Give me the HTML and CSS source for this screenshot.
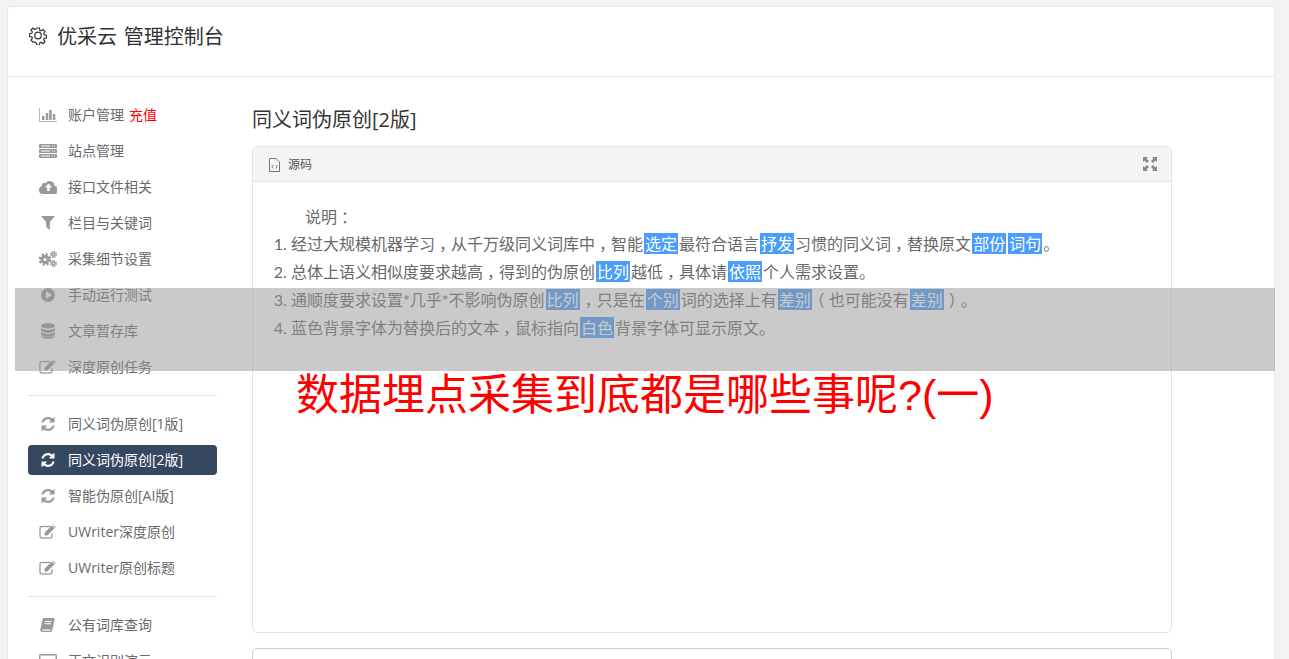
FILE: index.html
```html
<!DOCTYPE html>
<html lang="zh-CN">
<head>
<meta charset="utf-8">
<title>优采云 管理控制台</title>
<link rel="stylesheet" href="styles.css">
</head>
<body>
<svg class="defs" width="0" height="0" aria-hidden="true">
  <symbol id="i-bar" viewBox="0 0 18 14"><path opacity=".7" d="M0 0h1v13h17v1H0z"/><path d="M3 8h2.500v4H3zM6.800 5h2.500v7H6.800zM10.200 2h2.500v10h-2.500zM13.800 6h2.500v6h-2.500z"/></symbol>
  <symbol id="i-server" viewBox="0 0 18 14"><path fill-rule="evenodd" d="M1 0h16a1 1 0 0 1 1 1v2.500a.5.500 0 0 1-.5.500H.5a.5.500 0 0 1-.5-.5V1a1 1 0 0 1 1-1zM.5 5h17a.5.500 0 0 1 .5.500v3a.5.500 0 0 1-.5.500H.5a.5.500 0 0 1-.5-.5v-3A.5.500 0 0 1 .5 5zM.5 10h17a.5.500 0 0 1 .5.500V13a1 1 0 0 1-1 1H1a1 1 0 0 1-1-1v-2.500a.5.500 0 0 1 .5-.5zM2 1.500v1h9v-1zM13 1.500v1h1v-1zM15 1.500v1h1v-1zM2 6.500v1h9v-1zM13 6.500v1h1v-1zM15 6.500v1h1v-1zM2 11.500v1h9v-1zM13 11.500v1h1v-1zM15 11.500v1h1v-1z"/></symbol>
  <symbol id="i-cloud" viewBox="0 0 18 14"><path fill-rule="evenodd" d="M4 14a4 4 0 0 1-1.300-7.800A3 3 0 0 1 6.500 3 5 5 0 0 1 15.500 6 4 4 0 0 1 14.500 14zM9.500 3.500 5.800 7.500h2.400V11h2.600V7.500h2.400z"/></symbol>
  <symbol id="i-filter" viewBox="0 0 14 14"><path d="M0 0h14L8.800 6v8L5.200 11V6z"/></symbol>
  <symbol id="i-cogs" viewBox="0 0 18 16">
    <g fill="none" stroke="currentColor"><circle cx="6" cy="8.500" r="3" stroke-width="3"/><circle cx="6" cy="8.500" r="5.200" stroke-width="2.200" stroke-dasharray="2.300 1.780"/><circle cx="14.500" cy="3.500" r="1.600" stroke-width="1.600"/><circle cx="14.500" cy="3.500" r="3" stroke-width="1.200" stroke-dasharray="1.300 1.060"/><circle cx="14.500" cy="12.500" r="1.600" stroke-width="1.600"/><circle cx="14.500" cy="12.500" r="3" stroke-width="1.200" stroke-dasharray="1.300 1.060"/></g>
  </symbol>
  <symbol id="i-play" viewBox="0 0 14 14"><path fill-rule="evenodd" d="M7 0a7 7 0 1 1 0 14A7 7 0 0 1 7 0zM5 3.500v7L11 7z"/></symbol>
  <symbol id="i-db" viewBox="0 0 14 16"><ellipse cx="7" cy="2.800" rx="7" ry="2.800"/><path d="M0 4.800C1 6.500 4 7 7 7s6-.5 7-2.200v2.400C14 8.800 10.500 10 7 10S0 8.800 0 7.200zM0 8.800C1 10.500 4 11 7 11s6-.5 7-2.200v2.400C14 12.800 10.500 14 7 14s-7-1.200-7-2.800z"/><path d="M0 12.600C1 14 4 14.500 7 14.500s6-.5 7-1.900v.6C14 14.900 10.500 16 7 16s-7-1.100-7-2.800z"/></symbol>
  <symbol id="i-edit" viewBox="0 0 17 15"><path d="M2.500 1.500H11v1H2.500A1 1 0 0 0 1.500 3.500v8a1.500 1.500 0 0 0 1.500 1.500h8a1.500 1.500 0 0 0 1.500-1.500V9h1v2.500a2.500 2.500 0 0 1-2.500 2.500H3a2.500 2.500 0 0 1-2.500-2.500v-8a2 2 0 0 1 2-2z" stroke="currentColor" stroke-width=".3"/><path d="M5.500 8.200 12.800 1 15.500 3.700 8.300 11H5.500zM13.500.3l.7-.3 2.600 2.600-.6.800z"/></symbol>
  <symbol id="i-refresh" viewBox="0 0 14 14"><path d="M7 0c1.700 0 3.200.7 4.300 1.700L12.500.5a.5.500 0 0 1 1 .3V5a.5.500 0 0 1-.5.500H8.800a.5.500 0 0 1-.3-.9l1.300-1.300A4 4 0 0 0 7 2.200 4.800 4.800 0 0 0 2.600 5.500H.4A7 7 0 0 1 7 0zM.5 8.500h4.700a.5.500 0 0 1 .3.900l-1.300 1.300A4 4 0 0 0 7 11.800a4.800 4.800 0 0 0 4.400-3.300h2.200A7 7 0 0 1 7 14c-1.700 0-3.200-.7-4.300-1.700l-1.200 1.200a.5.500 0 0 1-1-.3V9a.5.500 0 0 1 .5-.5z"/></symbol>
  <symbol id="i-book" viewBox="0 0 15 14"><path fill-rule="evenodd" d="M4 0h9.500a1 1 0 0 1 1 1.200L12.300 12a2 2 0 0 1-2 2H2.500A2.200 2.200 0 0 1 .3 11.500L2.700 1A1.500 1.500 0 0 1 4 0zM5 3v1h6.500V3zM4.500 5.200v1H11v-1zM2.500 11.500a1 1 0 0 0 0 1.300h7.800l.3-1.300z"/></symbol>
  <symbol id="i-screen" viewBox="0 0 18 14"><path fill-rule="evenodd" d="M1.500 0h15A1.500 1.500 0 0 1 18 1.500v11a1.500 1.500 0 0 1-1.500 1.500h-15A1.500 1.500 0 0 1 0 12.500v-11A1.500 1.500 0 0 1 1.500 0zM1.500 1.500v11h15v-11z"/></symbol>
</svg>

<div class="card">
  <header class="card-head">
    <svg class="gear" viewBox="0 0 18 18" aria-hidden="true"><path fill="none" stroke="currentColor" stroke-width="1.200" d="M7.600 1h2.800l.4 2.300 1.300.6 1.900-1.300 2 2-1.400 1.900.6 1.300 2.300.4v2.800l-2.300.4-.6 1.300 1.400 1.900-2 2-1.900-1.400-1.300.6-.4 2.200H7.600l-.4-2.200-1.300-.6L4 15.100l-2-2 1.400-1.900-.6-1.300L.5 9.500V6.700"/><path fill="none" stroke="currentColor" stroke-width="1.200" d="M.5 6.700l2.300-.4.6-1.300L2 3.100l2-2 1.900 1.400 1.300-.6L7.600 1"/><circle cx="9" cy="8.500" r="3.300" fill="none" stroke="currentColor" stroke-width="1.200"/></svg>
    <h1 class="brand">优采云 管理控制台</h1>
  </header>
  <div class="card-body">
    <nav class="side">
      <ul class="menu">
        <li class="item"><svg class="ico ico-18x14"><use href="#i-bar"/></svg><span>账户管理</span><a class="recharge">充值</a></li>
        <li class="item"><svg class="ico ico-18x14"><use href="#i-server"/></svg><span>站点管理</span></li>
        <li class="item"><svg class="ico ico-18x14"><use href="#i-cloud"/></svg><span>接口文件相关</span></li>
        <li class="item"><svg class="ico ico-14"><use href="#i-filter"/></svg><span>栏目与关键词</span></li>
        <li class="item"><svg class="ico ico-18x16"><use href="#i-cogs"/></svg><span>采集细节设置</span></li>
        <li class="item"><svg class="ico ico-14"><use href="#i-play"/></svg><span>手动运行测试</span></li>
        <li class="item"><svg class="ico ico-14x16"><use href="#i-db"/></svg><span>文章暂存库</span></li>
        <li class="item"><svg class="ico ico-17x15"><use href="#i-edit"/></svg><span>深度原创任务</span></li>
      </ul>
      <hr class="sep">
      <ul class="menu">
        <li class="item"><svg class="ico ico-14"><use href="#i-refresh"/></svg><span>同义词伪原创[1版]</span></li>
        <li class="item active"><svg class="ico ico-14"><use href="#i-refresh"/></svg><span>同义词伪原创[2版]</span></li>
        <li class="item"><svg class="ico ico-14"><use href="#i-refresh"/></svg><span>智能伪原创[AI版]</span></li>
        <li class="item"><svg class="ico ico-17x15"><use href="#i-edit"/></svg><span>UWriter深度原创</span></li>
        <li class="item"><svg class="ico ico-17x15"><use href="#i-edit"/></svg><span>UWriter原创标题</span></li>
      </ul>
      <hr class="sep">
      <ul class="menu">
        <li class="item"><svg class="ico ico-15x14"><use href="#i-book"/></svg><span>公有词库查询</span></li>
        <li class="item"><svg class="ico ico-18x14"><use href="#i-screen"/></svg><span>正文识别演示</span></li>
      </ul>
    </nav>
    <main class="content">
      <h2 class="title">同义词伪原创[2版]</h2>
      <section class="panel">
        <div class="panel-head">
          <span class="panel-label">
            <svg class="file" viewBox="0 0 11 14" aria-hidden="true"><path fill="none" stroke="currentColor" d="M.5.500h6.500l3.500 3.500v9.500H.5z"/><path fill="none" stroke="currentColor" d="M4.300 7 2.800 8.700l1.500 1.700M6.700 7l1.500 1.700-1.500 1.700"/></svg>
            源码
          </span>
          <svg class="expand" viewBox="0 0 14 14" aria-hidden="true"><path d="M0 0h5L3.500 1.500 6 4 4 6 1.500 3.500 0 5zM14 0v5l-1.500-1.500L10 6 8 4l2.500-2.500L9 0zM0 14V9l1.500 1.500L4 8l2 2-2.500 2.500L5 14zM14 14H9l1.500-1.500L8 10l2-2 2.500 2.500L14 9z"/></svg>
        </div>
        <div class="panel-body">
          <p class="lead">说明<span class="pc">：</span></p>
          <ol class="notes">
            <li>经过大规模机器学习<span class="pc">，</span>从千万级同义词库中<span class="pc">，</span>智能<mark>选定</mark>最符合语言<mark>抒发</mark>习惯的同义词<span class="pc">，</span>替换原文<mark>部份</mark><mark>词句</mark>。</li>
            <li>总体上语义相似度要求越高<span class="pc">，</span>得到的伪原创<mark>比列</mark>越低<span class="pc">，</span>具体请<mark>依照</mark>个人需求设置。</li>
            <li>通顺度要求设置*几乎*不影响伪原创<mark>比列</mark><span class="pc">，</span>只是在<mark>个别</mark>词的选择上有<mark>差别</mark><span class="pc">（</span>也可能没有<mark>差别</mark><span class="pc">）</span>。</li>
            <li>蓝色背景字体为替换后的文本<span class="pc">，</span>鼠标指向<mark>白色</mark>背景字体可显示原文。</li>
          </ol>
        </div>
      </section>
      <section class="panel panel-next"></section>
    </main>
  </div>
</div>

<div class="banner"></div>
<p class="headline">数据埋点采集到底都是哪些事呢?(一)</p>
</body>
</html>
```
FILE: styles.css
```css
* { box-sizing: border-box; }
html, body { height: 100%; }
body {
  margin: 0;
  padding: 6px 14px 0 7px;
  height: 659px;
  overflow: hidden;
  background: #f3f3f3;
  font-family: "Open Sans", "Noto Sans CJK SC", sans-serif;
  color: #676a6c;
}
.defs { position: absolute; }
.card {
  background: #fff;
  border: 1px solid #e7e7e7;
  border-radius: 4px;
  height: 900px;
}
.card-head {
  height: 70px;
  border-bottom: 1px solid #e7e7e7;
  display: flex;
  align-items: flex-start;
  padding: 20px 0 0 21px;
  color: #333;
}
.gear { width: 18px; height: 18px; margin-right: 10px; flex: none; }
.brand {
  margin: 0;
  font-size: 20px;
  line-height: 20px;
  font-weight: 400;
  word-spacing: 1.500px;
  color: #333;
}
.card-body { display: flex; padding: 23px 0 0 20px; }
.side { width: 189px; flex: none; }
.menu { list-style: none; margin: 0; padding: 0; display: flex; flex-direction: column; gap: 6px; }
.item {
  height: 30px;
  border-radius: 4px;
  display: flex;
  align-items: center;
  padding: 0 0 2px 11px;
  font-size: 14px;
  color: #676a6c;
  position: relative;
}
.item > span { margin-left: 29px; }
.ico { position: absolute; left: 11px; top: 50%; transform: translateY(-50%); color: #999; fill: currentColor; }
.ico-18x14 { width: 18px; height: 14px; }
.ico-18x16 { width: 18px; height: 16px; }
.ico-14 { width: 14px; height: 14px; left: 13px; }
.ico-14x16 { width: 14px; height: 16px; left: 13px; }
.ico-17x15 { width: 17px; height: 15px; }
.ico-15x14 { width: 15px; height: 14px; left: 12px; }
.recharge { color: #f00; font-size: 14px; margin-left: 5px; }
.item.active { background: #364760; color: #fff; }
.item.active .ico { color: #fff; }
.sep { border: 0; border-top: 1px solid #e2e2e2; margin: 13px 0; }
.content { margin-left: 35px; width: 920px; flex: none; }
.title {
  margin: 5px 0 11px;
  font-size: 20px;
  line-height: 30px;
  font-weight: 400;
  color: #333;
}
.panel { border: 1px solid #e5e5e5; border-radius: 5px; height: 487px; background: #fff; }
.panel-head {
  height: 35px;
  background: #f4f4f4;
  border-bottom: 1px solid #e5e5e5;
  border-radius: 5px 5px 0 0;
  display: flex;
  align-items: center;
  justify-content: space-between;
  padding: 0 14px 0 16px;
  font-size: 12px;
  color: #555;
}
.panel-label { display: flex; align-items: center; gap: 8px; }
.file { width: 11px; height: 14px; color: #777; margin-top: 2px; }
.expand { width: 14px; height: 14px; fill: #888; }
.panel-body {
  padding: 21px 0 0 0;
  font-family: "Lato", "Noto Sans CJK SC", sans-serif;
  font-size: 16px;
  line-height: 28px;
  color: #676a6c;
}
.lead { margin: 0 0 -1px 52px; }
.notes { margin: 0; padding: 0 0 0 38px; }
.notes mark { background: #4a9dfa; color: #fff; padding: 1px; margin: 0 1px; }
.pc {
  display: inline-block;
  width: 1em;
  text-align: center;
  font-feature-settings: "halt";
}
.panel-next { margin-top: 15px; border-color: #ccc; }
.banner {
  position: absolute;
  left: 15px;
  top: 288px;
  width: 1260px;
  height: 83px;
  background: rgba(150, 150, 150, .5);
}
.headline {
  position: absolute;
  left: 296px;
  top: 367px;
  margin: 0;
  font-family: "Liberation Sans", "Noto Sans CJK SC", sans-serif;
  font-size: 43px;
  line-height: 56px;
  color: #f00;
  white-space: nowrap;
}
```
